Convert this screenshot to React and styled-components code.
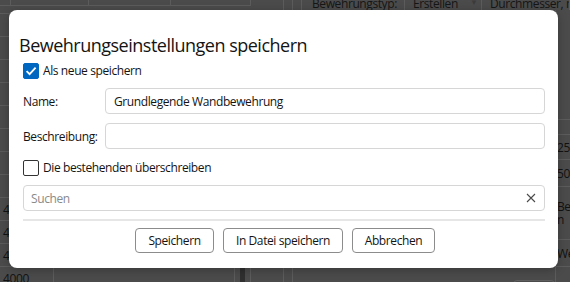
import React from 'react';
import styled, { createGlobalStyle } from 'styled-components';

const GlobalStyle = createGlobalStyle`
  html, body {
    margin: 0;
    padding: 0;
  }
  body {
    font-family: 'Open Sans', 'Noto Sans', sans-serif;
    font-size: 12px;
    letter-spacing: -0.4px;
    color: #141414;
  }
`;

const Screen = styled.div`
  position: relative;
  width: 570px;
  height: 282px;
  overflow: hidden;
  background: #4b4b4b;
  display: flex;
  flex-direction: column;
`;

/* ---- dimmed application behind the dialog ---- */

const TopBar = styled.div`
  display: flex;
  height: 10px;
  flex-shrink: 0;
`;

const TopCell = styled.div`
  width: ${(p) => (p.$w ? `${p.$w}px` : 'auto')};
  flex: ${(p) => (p.$w ? '0 0 auto' : '1')};
  height: ${(p) => (p.$ruled ? '6px' : '10px')};
  border-right: 1px solid #5c5c5c;
  border-bottom: ${(p) => (p.$ruled ? '1px solid #5c5c5c' : 'none')};
  box-sizing: border-box;
  display: flex;
  align-items: flex-end;
  gap: 12px;
  padding-left: ${(p) => p.$pad || 0}px;
  overflow: hidden;
  color: #161616;
  line-height: 12px;
  white-space: nowrap;
`;

const Caret = styled.span`
  font-size: 8px;
  color: #3c3c3c;
  margin-left: auto;
  margin-right: 6px;
  margin-bottom: 2px;
`;

const Body = styled.div`
  flex: 1;
  display: flex;
`;

const LeftCol = styled.div`
  width: 54px;
  border-right: 1px solid #5c5c5c;
  box-sizing: border-box;
  padding-top: 3px;
  display: flex;
  flex-direction: column;
`;

const NumCell = styled.div`
  height: 23px;
  flex-shrink: 0;
  border-top: 1px solid #5c5c5c;
  box-sizing: border-box;
  padding-left: 3px;
  display: flex;
  align-items: center;
  color: #121212;
`;

const Middle = styled.div`
  flex: 1;
  display: flex;
`;

const Lane = styled.div`
  width: ${(p) => (p.$w ? `${p.$w}px` : 'auto')};
  flex: ${(p) => (p.$w ? '0 0 auto' : '1')};
  background: ${(p) => (p.$dark ? '#2f2f2f' : 'transparent')};
  border-right: ${(p) => (p.$line ? '1px solid #5c5c5c' : 'none')};
  box-sizing: border-box;
  display: flex;
  align-items: flex-end;
  justify-content: flex-end;
`;

const GhostButton = styled.div`
  width: 40px;
  height: 10px;
  margin-bottom: -3px;
  border: 1px solid #5e5e5e;
  border-radius: 4px;
`;

const RightCol = styled.div`
  width: 15px;
  border-left: 1px solid #5c5c5c;
  box-sizing: border-box;
  display: flex;
  flex-direction: column;
`;

const SideCell = styled.div`
  height: ${(p) => p.$h}px;
  flex-shrink: 0;
  border-bottom: 1px solid #5c5c5c;
  box-sizing: border-box;
  padding-left: 1px;
  display: flex;
  align-items: center;
  line-height: 13px;
  color: #121212;
  white-space: pre;
  overflow: hidden;
`;

/* ---- dialog ---- */

const Dialog = styled.div`
  position: absolute;
  left: 9px;
  top: 10px;
  width: 549px;
  height: 258px;
  box-sizing: border-box;
  background: #ffffff;
  border-radius: 8px;
  box-shadow: 0 2px 10px rgba(0, 0, 0, 0.25);
  padding: 23px 13px 15px 14px;
  display: flex;
  flex-direction: column;
`;

const Title = styled.h1`
  margin: 0 0 0 -4px;
  font-size: 18px;
  font-weight: 400;
  line-height: 24px;
  letter-spacing: -0.5px;
  color: #141414;
`;

const CheckRow = styled.label`
  display: flex;
  align-items: center;
  gap: 4px;
  height: 16px;
  margin-top: ${(p) => p.$mt}px;
  line-height: 16px;
`;

const Box = styled.span`
  width: 16px;
  height: 16px;
  box-sizing: border-box;
  border-radius: 2px;
  flex-shrink: 0;
  display: flex;
  align-items: center;
  justify-content: center;
  background: ${(p) => (p.$checked ? '#0067c0' : '#ffffff')};
  border: 1px solid ${(p) => (p.$checked ? '#0067c0' : '#333333')};
`;

const FieldRow = styled.div`
  display: flex;
  align-items: center;
  margin-top: ${(p) => p.$mt}px;
`;

const FieldLabel = styled.span`
  width: 82px;
  flex-shrink: 0;
`;

const Input = styled.div`
  flex: 1;
  height: 26px;
  box-sizing: border-box;
  border: 1px solid #d6d6d6;
  border-radius: 4px;
  padding: 0 8px;
  display: flex;
  align-items: center;
`;

const SearchBox = styled(Input)`
  margin-top: ${(p) => p.$mt}px;
  padding: 0 8px 0 7px;
  justify-content: space-between;
`;

const Placeholder = styled.span`
  color: #8a8a8a;
`;

const Divider = styled.div`
  height: 2px;
  margin-top: 8px;
  background: #e6e6e6;
`;

const ButtonBar = styled.div`
  display: flex;
  justify-content: center;
  gap: 9px;
  margin-top: 7px;
  padding-left: 2px;
`;

const Button = styled.button`
  width: ${(p) => p.$w}px;
  height: 25px;
  box-sizing: border-box;
  border: 1px solid #8c8c8c;
  border-radius: 4px;
  background: #ffffff;
  font-family: inherit;
  font-size: 12px;
  letter-spacing: -0.4px;
  color: #141414;
  padding: 0;
`;

const CheckMark = () => (
  <svg width="12" height="12" viewBox="0 0 12 12">
    <path d="M1.6 6.2 L4.6 9.2 L10.6 2.6" fill="none" stroke="#ffffff" strokeWidth="1.8" />
  </svg>
);

const ClearIcon = () => (
  <svg width="10" height="10" viewBox="0 0 10 10">
    <path d="M1 1 L9 9 M9 1 L1 9" stroke="#4a4a4a" strokeWidth="1.1" />
  </svg>
);

const sideRows = [
  { h: 110, t: '' },
  { h: 15, t: '' },
  { h: 25, t: '25' },
  { h: 27, t: '50' },
  { h: 53, t: 'Be\nn' },
  { h: 27, t: 'We' },
  { h: 20, t: '' },
];

// only the lower rows of the length column hold values
const lengths = ['', '', '', '', '', '', '', '', '4000', '4000', '4000', '4000'];

const App = () => {
  return (
    <Screen>
      <GlobalStyle />
      <TopBar>
        <TopCell $w={11} $ruled />
        <TopCell $w={78} $ruled />
        <TopCell $w={82} $ruled />
        <TopCell $w={80} $ruled />
        <TopCell $w={33} />
        <TopCell $w={9} />
        <TopCell $w={9} />
        <TopCell $w={103} $pad={10}>
          <span>Bewehrungstyp:</span>
        </TopCell>
        <TopCell $w={77} $pad={8}>
          <span>Erstellen</span>
          <Caret>▼</Caret>
        </TopCell>
        <TopCell $pad={8}>
          <span>Durchmesser, mm</span>
        </TopCell>
      </TopBar>

      <Body>
        <LeftCol>
          {lengths.map((v, i) => (
            <NumCell key={i}>{v}</NumCell>
          ))}
        </LeftCol>
        <Middle>
          <Lane $w={181} $line />
          <Lane $w={5} />
          <Lane $w={5} $dark />
          <Lane $w={6} $line />
          <Lane $w={33} $line />
          <Lane $w={9} $line />
          <Lane>
            <GhostButton />
          </Lane>
        </Middle>
        <RightCol>
          {sideRows.map((r, i) => (
            <SideCell key={i} $h={r.h}>
              {r.t}
            </SideCell>
          ))}
        </RightCol>
      </Body>

      <Dialog>
        <Title>Bewehrungseinstellungen speichern</Title>
        <CheckRow $mt={6}>
          <Box $checked>
            <CheckMark />
          </Box>
          Als neue speichern
        </CheckRow>
        <FieldRow $mt={9}>
          <FieldLabel>Name:</FieldLabel>
          <Input>Grundlegende Wandbewehrung</Input>
        </FieldRow>
        <FieldRow $mt={9}>
          <FieldLabel>Beschreibung:</FieldLabel>
          <Input />
        </FieldRow>
        <CheckRow $mt={11}>
          <Box />
          Die bestehenden überschreiben
        </CheckRow>
        <SearchBox $mt={9}>
          <Placeholder>Suchen</Placeholder>
          <ClearIcon />
        </SearchBox>
        <Divider />
        <ButtonBar>
          <Button $w={79}>Speichern</Button>
          <Button $w={120}>In Datei speichern</Button>
          <Button $w={83}>Abbrechen</Button>
        </ButtonBar>
      </Dialog>
    </Screen>
  );
};

export default App;
